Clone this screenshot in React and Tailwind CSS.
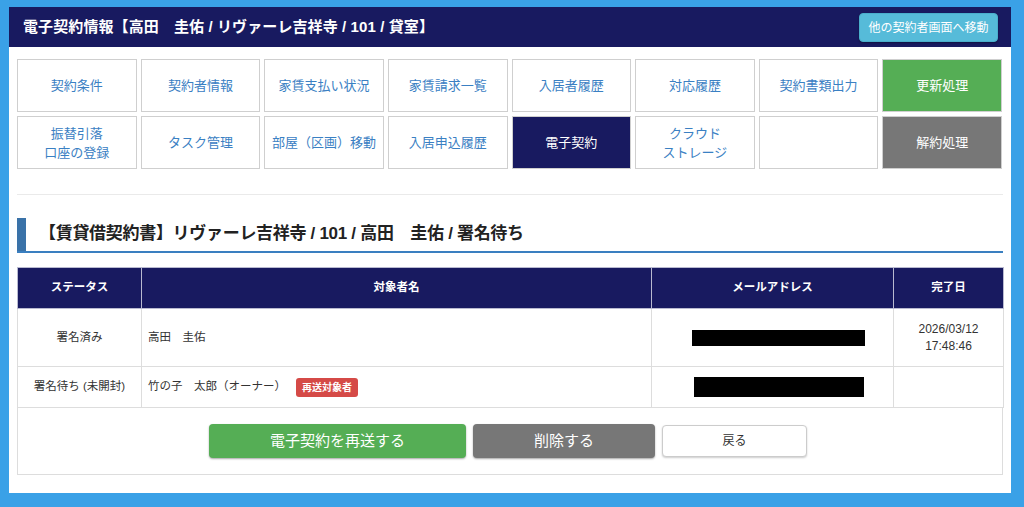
import React from "react";

const font = { fontFamily: '"Liberation Sans", "Noto Sans CJK JP", sans-serif' };

const row1 = ["契約条件", "契約者情報", "家賃支払い状況", "家賃請求一覧", "入居者履歴", "対応履歴", "契約書類出力"];

function Tab({ children, className = "" }) {
  return (
    <div
      className={
        "h-[53px] flex items-center justify-center text-center border border-[#cfcfcf] text-[13px] leading-[19px] " +
        className
      }
    >
      {children}
    </div>
  );
}

export default function App() {
  return (
    <div className="w-[1024px] h-[507px] bg-[#3aa1e7] pt-[7px] pl-[9px] overflow-hidden" style={font}>
      <div className="w-[1002px] h-[486px] bg-white">
        {/* header */}
        <div className="h-[40px] bg-[#181a60] flex items-center justify-between pl-[14px] pr-[13px]">
          <div className="text-white text-[15px] font-semibold tracking-[0.1px]">
            電子契約情報【高田　圭佑 / リヴァーレ吉祥寺 / 101 / 貸室】
          </div>
          <div className="w-[139px] h-[29px] mt-[1px] rounded-[4px] bg-[#56bbd9] border border-[#4aaecb] shadow-[0_1px_2px_rgba(0,0,0,0.35)] text-white text-[12px] flex items-center justify-center">
            他の契約者画面へ移動
          </div>
        </div>

        <div className="px-[8px]">
          {/* tabs */}
          <div className="mt-[12px] grid grid-cols-8 gap-x-[4px] gap-y-[4px] w-[985px]">
            {row1.map((t) => (
              <Tab key={t} className="text-[#3a80c3] bg-white">{t}</Tab>
            ))}
            <Tab className="bg-[#55ae55] border-[#cfcfcf] text-white">更新処理</Tab>
            <Tab className="text-[#3a80c3]">
              振替引落
              <br />
              口座の登録
            </Tab>
            <Tab className="text-[#3a80c3]">タスク管理</Tab>
            <Tab className="text-[#3a80c3]">部屋（区画）移動</Tab>
            <Tab className="text-[#3a80c3]">入居申込履歴</Tab>
            <Tab className="bg-[#181a60] text-white">電子契約</Tab>
            <Tab className="text-[#3a80c3]">
              クラウド
              <br />
              ストレージ
            </Tab>
            <Tab />
            <Tab className="bg-[#777777] text-white">解約処理</Tab>
          </div>

          {/* divider */}
          <div className="mt-[25px] h-px bg-[#eaeaea]" />

          {/* heading */}
          <div className="mt-[23px] flex h-[35px] border-b-2 border-[#3a7fc0]">
            <div className="w-[9px] bg-[#3a72a8]" />
            <div className="pl-[13px] flex items-center text-[17px] font-bold text-[#222] pb-[2px] tracking-[-0.3px]">
              【賃貸借契約書】リヴァーレ吉祥寺 / 101 / 高田　圭佑 / 署名待ち
            </div>
          </div>

          {/* table */}
          <table className="mt-[14px] w-[986px] border-collapse table-fixed text-[11.5px] text-[#333]">
            <colgroup>
              <col className="w-[124px]" />
              <col className="w-[510px]" />
              <col className="w-[242px]" />
              <col className="w-[110px]" />
            </colgroup>
            <thead>
              <tr className="h-[41px] bg-[#181a60] text-white">
                <th className="border border-[#b9bad0] font-bold">ステータス</th>
                <th className="border border-[#b9bad0] font-bold">対象者名</th>
                <th className="border border-[#b9bad0] font-bold">メールアドレス</th>
                <th className="border border-[#b9bad0] font-bold">完了日</th>
              </tr>
            </thead>
            <tbody>
              <tr className="h-[58px]">
                <td className="border border-[#dddddd] text-center">署名済み</td>
                <td className="border border-[#dddddd] pl-[6px]">高田　圭佑</td>
                <td className="border border-[#dddddd]">
                  <div className="ml-[40px] w-[173px] h-[16px] bg-black" />
                </td>
                <td className="border border-[#dddddd] text-center leading-[17px] text-[12px]">
                  2026/03/12
                  <br />
                  17:48:46
                </td>
              </tr>
              <tr className="h-[41px]">
                <td className="border border-[#dddddd] text-center">署名待ち (未開封)</td>
                <td className="border border-[#dddddd] pl-[6px]">
                  <span className="inline-flex items-center">
                    竹の子　太郎（オーナー）
                    <span className="ml-[10px] inline-flex items-center h-[19px] px-[6px] rounded-[3px] bg-[#d54a47] text-white text-[10px] font-bold">
                      再送対象者
                    </span>
                  </span>
                </td>
                <td className="border border-[#dddddd]">
                  <div className="ml-[42px] w-[170px] h-[20px] bg-black" />
                </td>
                <td className="border border-[#dddddd]" />
              </tr>
            </tbody>
          </table>

          {/* buttons */}
          <div className="h-[67px] border border-t-0 border-[#dddddd] flex justify-center pt-[16px] gap-[7px] pr-[4px]">
            <div className="w-[257px] h-[34px] rounded-[4px] bg-[#55ae55] shadow-[0_1px_2px_rgba(0,0,0,0.35)] text-white text-[15px] flex items-center justify-center">
              電子契約を再送する
            </div>
            <div className="w-[182px] h-[34px] rounded-[4px] bg-[#777777] shadow-[0_1px_2px_rgba(0,0,0,0.35)] text-white text-[15px] flex items-center justify-center">
              削除する
            </div>
            <div className="w-[145px] h-[32px] mt-[1px] rounded-[4px] bg-white border border-[#cccccc] shadow-[0_1px_2px_rgba(0,0,0,0.2)] text-[#333] text-[12px] flex items-center justify-center">
              戻る
            </div>
          </div>
        </div>
      </div>
    </div>
  );
}
